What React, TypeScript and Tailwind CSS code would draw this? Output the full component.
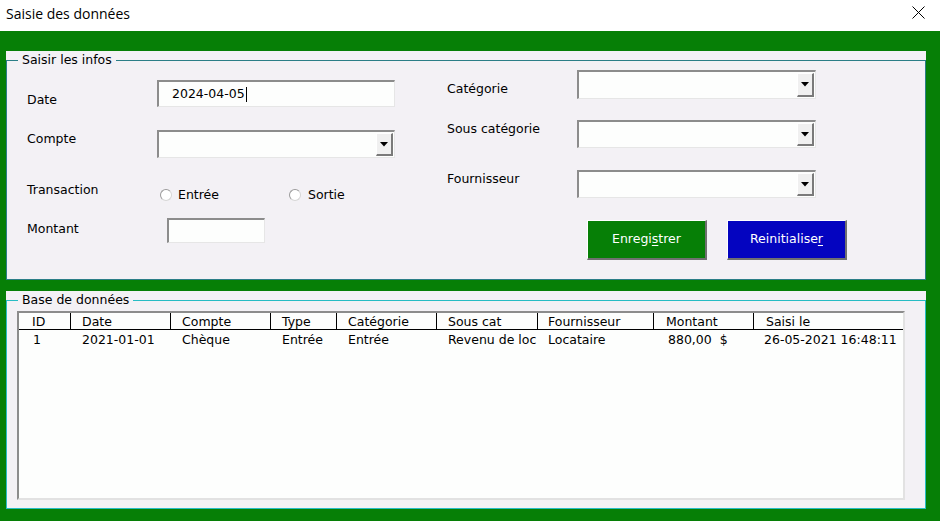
import * as React from 'react';

/**
 * Saisie des données – VBA-style user form
 */

function SunkenBox({ className, children }: { className: string; children?: React.ReactNode }) {
  return (
    <div
      className={
        'flex items-center bg-[#fdfefd] border-t-2 border-l-2 border-b border-r border-t-[#8c8c8c] border-l-[#8c8c8c] border-b-[#e6e6e6] border-r-[#e6e6e6] ' +
        className
      }
    >
      {children}
    </div>
  );
}

function Combo({ className }: { className: string }) {
  return (
    <SunkenBox className={'justify-end items-stretch ' + className}>
      <div className="w-[17px] my-px mr-px flex items-center justify-center bg-[#f0f0f0] border-t border-l border-t-white border-l-white border-b-2 border-r-2 border-b-[#7a7a7a] border-r-[#7a7a7a]">
        <svg width="8" height="5" viewBox="0 0 8 5">
          <path d="M0 0 H8 L4 4.5 Z" fill="#000" />
        </svg>
      </div>
    </SunkenBox>
  );
}

function Radio({ label, className }: { label: string; className?: string }) {
  return (
    <div className={'flex items-center gap-[6px] ' + (className ?? '')}>
      <div className="w-3 h-3 rounded-full bg-white border border-[#9a9a9a] border-b-[#d6d6d6] border-r-[#d6d6d6]" />
      <span>{label}</span>
    </div>
  );
}

function Label({ children, className }: { children: React.ReactNode; className: string }) {
  return <div className={'leading-4 shrink-0 ' + className}>{children}</div>;
}

function FormButton({ bg, children }: { bg: string; children: React.ReactNode }) {
  return (
    <button
      className={
        'w-[120px] h-[40px] text-white text-[12.5px] border-t border-l border-t-white border-l-white border-b-2 border-r-2 border-b-[#707070] border-r-[#707070] ' +
        bg
      }
    >
      {children}
    </button>
  );
}

const columns = [
  { head: 'ID', w: 'w-[52px]', hp: 'pl-[13px]', value: '1', dp: 'pl-[14px]' },
  { head: 'Date', w: 'w-[100px]', hp: 'pl-[11px]', value: '2021-01-01', dp: 'pl-[11px]' },
  { head: 'Compte', w: 'w-[100px]', hp: 'pl-[11px]', value: 'Chèque', dp: 'pl-[11px]' },
  { head: 'Type', w: 'w-[66px]', hp: 'pl-[11px]', value: 'Entrée', dp: 'pl-[11px]' },
  { head: 'Catégorie', w: 'w-[100px]', hp: 'pl-[11px]', value: 'Entrée', dp: 'pl-[11px]' },
  { head: 'Sous cat', w: 'w-[101px]', hp: 'pl-[11px]', value: 'Revenu de loc', dp: 'pl-[11px]' },
  { head: 'Fournisseur', w: 'w-[116px]', hp: 'pl-[10px]', value: 'Locataire', dp: 'pl-[10px]' },
  { head: 'Montant', w: 'w-[100px]', hp: 'pl-[12px]', value: '880,00  $', dp: 'pl-[14px]' },
  { head: 'Saisi le', w: 'flex-1', hp: 'pl-[12px]', value: '26-05-2021 16:48:11', dp: 'pl-[10px]' },
];

export default function App() {
  return (
    <div className="w-[940px] h-[521px] bg-[#067f06] flex flex-col font-['DejaVu_Sans',sans-serif] text-[12.5px] text-black overflow-hidden">
      {/* Title bar */}
      <div className="h-[31px] bg-white flex items-center justify-between pl-[6px] pr-[15px] shrink-0">
        <span className="font-['Open_Sans',sans-serif] text-[14px] -mt-[5px]">Saisie des données</span>
        <svg width="13" height="13" viewBox="0 0 13 13" className="-mt-[6px]">
          <path d="M0.5 0.5 L12.5 12.5 M12.5 0.5 L0.5 12.5" stroke="#000" strokeWidth="1" />
        </svg>
      </div>

      <div className="flex flex-col pt-[20px] px-[6px] pr-[14px]">
        {/* Saisir les infos */}
        <div className="h-[229px] bg-[#f3f1f5] pt-px">
          <fieldset className="h-[228px] border border-[#2b7e87]">
            <legend className="ml-[11px] px-[4px] leading-4">Saisir les infos</legend>
            <div className="flex">
              {/* Left column */}
              <div className="w-[440px] pl-[20px] pt-[12px] flex flex-col">
                <div className="flex h-[27px]">
                  <Label className="w-[130px] pt-[12px]">Date</Label>
                  <SunkenBox className="w-[238px] h-[27px] pl-[13px]">
                    <span>2024-04-05</span>
                    <span className="w-px h-[15px] bg-black ml-px" />
                  </SunkenBox>
                </div>
                <div className="flex h-[28px] mt-[23px]">
                  <Label className="w-[130px] pt-[1px]">Compte</Label>
                  <Combo className="w-[238px] h-[28px]" />
                </div>
                <div className="flex h-[22px] mt-[23px]">
                  <Label className="w-[133px] pt-px">Transaction</Label>
                  <div className="flex mt-[6px] h-4">
                    <Radio label="Entrée" className="w-[129px]" />
                    <Radio label="Sortie" className="gap-[7px]" />
                  </div>
                </div>
                <div className="flex h-[25px] mt-[15px]">
                  <Label className="w-[140px] pt-[3px]">Montant</Label>
                  <SunkenBox className="w-[98px] h-[25px]" />
                </div>
              </div>

              {/* Right column */}
              <div className="pt-[2px] flex flex-col">
                <div className="flex h-[28px]">
                  <Label className="w-[130px] pt-[11px]">Catégorie</Label>
                  <Combo className="w-[239px] h-[29px]" />
                </div>
                <div className="flex h-[28px] mt-[22px]">
                  <Label className="w-[130px] pt-[1px]">Sous catégorie</Label>
                  <Combo className="w-[239px] h-[28px]" />
                </div>
                <div className="flex h-[28px] mt-[22px]">
                  <Label className="w-[130px] pt-[1px]">Fournisseur</Label>
                  <Combo className="w-[239px] h-[28px]" />
                </div>
                <div className="flex gap-[20px] ml-[140px] mt-[22px]">
                  <FormButton bg="bg-[#067f06]">
                    Enregi<span className="underline underline-offset-2">s</span>trer
                  </FormButton>
                  <FormButton bg="bg-[#0404c0]">
                    Reinitialise<span className="underline underline-offset-2">r</span>
                  </FormButton>
                </div>
              </div>
            </div>
          </fieldset>
        </div>

        {/* Base de données */}
        <div className="h-[218px] mt-[11px] bg-[#f3f1f5] pt-px">
          <fieldset className="h-[217px] border border-[#27bcc4]">
            <legend className="ml-[11px] px-[4px] leading-4">Base de données</legend>
            <div className="ml-[10px] mt-[3px] w-[888px] h-[189px] bg-[#fdfefd] border-t-2 border-l-2 border-b-2 border-r-2 border-t-[#8c8c8c] border-l-[#8c8c8c] border-b-[#e2e2e2] border-r-[#e2e2e2] flex flex-col">
              <div className="flex h-[17px] border-b border-black">
                {columns.map((c, i) => (
                  <div
                    key={c.head}
                    className={
                      'leading-4 pt-px whitespace-nowrap ' +
                      c.w +
                      ' ' +
                      c.hp +
                      (i < columns.length - 1 ? ' border-r border-black' : '')
                    }
                  >
                    {c.head}
                  </div>
                ))}
              </div>
              <div className="flex h-[20px]">
                {columns.map((c) => (
                  <div
                    key={c.head}
                    className={'leading-[20px] whitespace-pre overflow-hidden ' + c.w + ' ' + c.dp}
                  >
                    {c.value}
                  </div>
                ))}
              </div>
            </div>
          </fieldset>
        </div>
      </div>
    </div>
  );
}
